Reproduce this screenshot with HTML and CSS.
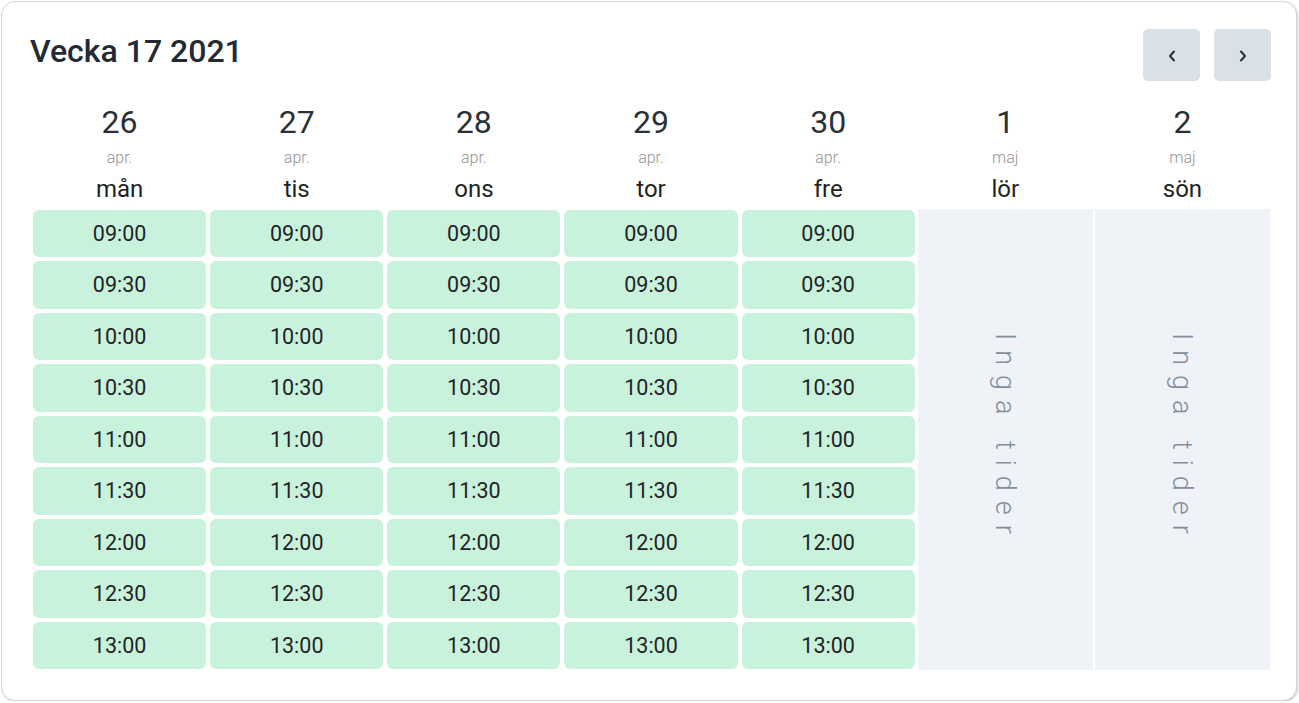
FILE: index.html
```html
<!DOCTYPE html>
<html lang="sv">
<head>
<meta charset="utf-8">
<title>Vecka 17 2021</title>
<link rel="stylesheet" href="styles.css">
</head>
<body>
<div class="card">
  <div class="topbar">
    <h1 class="title">Vecka 17 2021</h1>
    <div class="nav">
      <button class="nav-btn" aria-label="Föregående vecka">
        <svg width="8" height="12" viewBox="0 0 8 12"><path d="M6 1.5 L2 6 L6 10.5" fill="none" stroke="#2b3036" stroke-width="2" stroke-linecap="round" stroke-linejoin="round"/></svg>
      </button>
      <button class="nav-btn" aria-label="Nästa vecka">
        <svg width="8" height="12" viewBox="0 0 8 12"><path d="M2 1.5 L6 6 L2 10.5" fill="none" stroke="#2b3036" stroke-width="2" stroke-linecap="round" stroke-linejoin="round"/></svg>
      </button>
    </div>
  </div>
  <div class="week">
    <div class="day">
      <div class="day-head"><div class="num">26</div><div class="month">apr.</div><div class="wd">mån</div></div>
      <div class="slots">
        <div class="slot">09:00</div><div class="slot">09:30</div><div class="slot">10:00</div><div class="slot">10:30</div><div class="slot">11:00</div><div class="slot">11:30</div><div class="slot">12:00</div><div class="slot">12:30</div><div class="slot">13:00</div>
      </div>
    </div>
    <div class="day">
      <div class="day-head"><div class="num">27</div><div class="month">apr.</div><div class="wd">tis</div></div>
      <div class="slots">
        <div class="slot">09:00</div><div class="slot">09:30</div><div class="slot">10:00</div><div class="slot">10:30</div><div class="slot">11:00</div><div class="slot">11:30</div><div class="slot">12:00</div><div class="slot">12:30</div><div class="slot">13:00</div>
      </div>
    </div>
    <div class="day">
      <div class="day-head"><div class="num">28</div><div class="month">apr.</div><div class="wd">ons</div></div>
      <div class="slots">
        <div class="slot">09:00</div><div class="slot">09:30</div><div class="slot">10:00</div><div class="slot">10:30</div><div class="slot">11:00</div><div class="slot">11:30</div><div class="slot">12:00</div><div class="slot">12:30</div><div class="slot">13:00</div>
      </div>
    </div>
    <div class="day">
      <div class="day-head"><div class="num">29</div><div class="month">apr.</div><div class="wd">tor</div></div>
      <div class="slots">
        <div class="slot">09:00</div><div class="slot">09:30</div><div class="slot">10:00</div><div class="slot">10:30</div><div class="slot">11:00</div><div class="slot">11:30</div><div class="slot">12:00</div><div class="slot">12:30</div><div class="slot">13:00</div>
      </div>
    </div>
    <div class="day">
      <div class="day-head"><div class="num">30</div><div class="month">apr.</div><div class="wd">fre</div></div>
      <div class="slots">
        <div class="slot">09:00</div><div class="slot">09:30</div><div class="slot">10:00</div><div class="slot">10:30</div><div class="slot">11:00</div><div class="slot">11:30</div><div class="slot">12:00</div><div class="slot">12:30</div><div class="slot">13:00</div>
      </div>
    </div>
    <div class="day">
      <div class="day-head"><div class="num">1</div><div class="month">maj</div><div class="wd">lör</div></div>
      <div class="slots">
        <div class="empty"><span class="empty-text">Inga tider</span></div>
      </div>
    </div>
    <div class="day">
      <div class="day-head"><div class="num">2</div><div class="month">maj</div><div class="wd">sön</div></div>
      <div class="slots">
        <div class="empty"><span class="empty-text">Inga tider</span></div>
      </div>
    </div>
  </div>
</div>
</body>
</html>
```
FILE: styles.css
```css
html, body {
  margin: 0;
  padding: 0;
  background: #ffffff;
}
body {
  font-family: Roboto, "Liberation Sans", Arial, sans-serif;
  color: #222222;
}
.card {
  box-sizing: border-box;
  width: 1296px;
  height: 700px;
  margin: 1px 0 0 1px;
  border: 1px solid #d6d6d6;
  border-radius: 14px;
  box-shadow: 1px 1px 2px rgba(0, 0, 0, 0.18);
  padding: 27px 25px 0 29px;
  background: #ffffff;
}
.topbar {
  display: flex;
  justify-content: space-between;
  align-items: flex-start;
  height: 52px;
}
.title {
  margin: 0 0 0 -1px;
  padding-top: 2px;
  font-size: 32px;
  line-height: 40px;
  font-weight: 500;
  color: #222a33;
}
.nav {
  display: flex;
  gap: 14px;
}
.nav-btn {
  width: 57px;
  height: 52px;
  border: 0;
  border-radius: 5px;
  background: #dae0e7;
  display: flex;
  align-items: center;
  justify-content: center;
  padding: 0;
  cursor: pointer;
}
.nav-btn svg {
  display: block;
  margin-top: 2px;
}
.week {
  display: grid;
  grid-template-columns: repeat(7, 1fr);
}
.day {
  display: flex;
  flex-direction: column;
}
.day-head {
  padding: 21px 0 3.5px;
  text-align: center;
}
.num {
  font-size: 32px;
  line-height: 40px;
  color: #2b3036;
}
.month {
  font-size: 16px;
  line-height: 32px;
  font-weight: 300;
  color: #939393;
}
.wd {
  font-size: 24px;
  line-height: 30px;
  color: #222222;
}
.slots {
  height: 463.5px;
  display: flex;
  flex-direction: column;
}
.slot {
  height: 47.5px;
  margin: 2px;
  border-radius: 6px;
  background: #c9f2dc;
  display: flex;
  align-items: center;
  justify-content: center;
  font-size: 21.5px;
  color: #1f2326;
}
.empty {
  flex: 1;
  margin: 1px;
  background: #eff3f7;
  display: flex;
  align-items: center;
  justify-content: center;
}
.empty-text {
  writing-mode: vertical-rl;
  font-size: 27px;
  font-weight: 300;
  letter-spacing: 10px;
  color: #838f9d;
  margin-bottom: 2px;
}
```
